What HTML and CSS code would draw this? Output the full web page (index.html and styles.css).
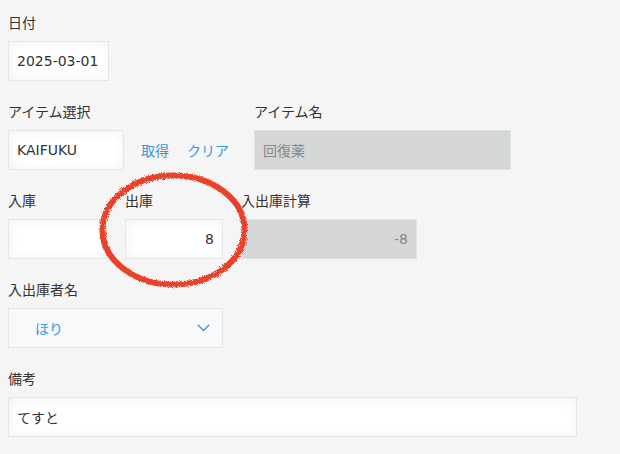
FILE: index.html
```html
<!DOCTYPE html>
<html lang="ja">
<head>
<meta charset="utf-8">
<title>入出庫</title>
<link rel="stylesheet" href="styles.css">
</head>
<body>
<div class="form">
  <div class="row">
    <div class="field">
      <div class="label">日付</div>
      <div class="input w-date">2025-03-01</div>
    </div>
  </div>

  <div class="row">
    <div class="field w-lookup">
      <div class="label">アイテム選択</div>
      <div class="lookup">
        <div class="input w-item">KAIFUKU</div>
        <a class="link link-get">取得</a>
        <a class="link link-clear">クリア</a>
      </div>
    </div>
    <div class="field">
      <div class="label">アイテム名</div>
      <div class="input disabled w-name">回復薬</div>
    </div>
  </div>

  <div class="row">
    <div class="field">
      <div class="label">入庫</div>
      <div class="input w-in"></div>
    </div>
    <div class="field">
      <div class="label">出庫</div>
      <div class="input w-out num">8</div>
    </div>
    <div class="field">
      <div class="label">入出庫計算</div>
      <div class="input disabled w-calc num">-8</div>
    </div>
  </div>

  <div class="row">
    <div class="field">
      <div class="label">入出庫者名</div>
      <div class="select w-select">
        <span class="select-text">ほり</span>
        <svg class="chevron" width="13" height="8" viewBox="0 0 13 8"><path d="M0.8 0.8 L6.5 6.5 L12.2 0.8" fill="none" stroke="#3498db" stroke-width="1.3"/></svg>
      </div>
    </div>
  </div>

  <div class="row">
    <div class="field">
      <div class="label">備考</div>
      <div class="input w-note">てすと</div>
    </div>
  </div>

  <svg class="mark" width="156" height="126" viewBox="0 0 156 126">
    <defs>
      <filter id="rough" x="-10%" y="-10%" width="120%" height="120%">
        <feTurbulence type="fractalNoise" baseFrequency="1.4" numOctaves="2" seed="5"/>
        <feDisplacementMap in="SourceGraphic" scale="4"/>
      </filter>
    </defs>
    <ellipse cx="77.5" cy="62" rx="71" ry="54.5" fill="none" stroke="#e8432b" stroke-width="6" filter="url(#rough)"/>
  </svg>
</div>
</body>
</html>
```

FILE: styles.css
```css
html, body {
  margin: 0;
  padding: 0;
  background: #f5f5f5;
}

body {
  font-family: "Noto Sans CJK JP", "DejaVu Sans", sans-serif;
  color: #333;
}

.form {
  position: relative;
  padding: 12px 8px 0;
  display: flex;
  flex-direction: column;
  gap: 20px;
}

.row {
  display: flex;
  gap: 18px;
}

.field {
  display: flex;
  flex-direction: column;
}

.label {
  font-size: 14px;
  line-height: 20px;
  height: 20px;
  margin-bottom: 9px;
  color: #333;
  white-space: nowrap;
}

.input {
  box-sizing: border-box;
  height: 40px;
  border: 1px solid #e3e7e8;
  background: #fff;
  box-shadow: 1px 1px 12px #f2f2f2 inset;
  padding: 0 8px;
  display: flex;
  align-items: center;
  font-family: "DejaVu Sans", "Noto Sans CJK JP", sans-serif;
  font-size: 14px;
  color: #333;
}

.input.disabled {
  background: #d5d7d6;
  box-shadow: none;
  border-color: #e0e3e3;
  color: #888;
}

.input.num {
  justify-content: flex-end;
}

.w-date { width: 101px; }
.w-item { width: 116px; }
.w-lookup { width: 228px; }
.w-name { width: 257px; }
.w-in { width: 99px; }
.w-out { width: 98px; }
.w-calc { width: 176px; }
.w-select { width: 215px; }
.w-note { width: 569px; }

.lookup {
  display: flex;
  align-items: center;
}

.link {
  font-size: 14px;
  color: #3498db;
  cursor: pointer;
}

.link-get { margin-left: 17px; }
.link-clear { margin-left: 18px; }

.select {
  box-sizing: border-box;
  height: 40px;
  border: 1px solid #e3e7e8;
  background: #f7f9fa;
  display: flex;
  align-items: center;
  justify-content: space-between;
  padding: 0 12px 0 26px;
}

.select-text {
  font-size: 14px;
  color: #3498db;
}

.chevron {
  display: block;
}

.mark {
  position: absolute;
  left: 96px;
  top: 168px;
  pointer-events: none;
}
```
